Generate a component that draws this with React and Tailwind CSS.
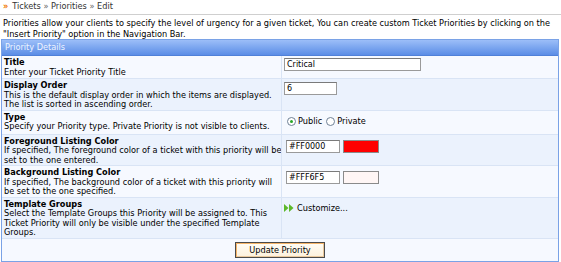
import React from 'react';

const Row = ({ title, lines, dark, minH = '', children }) => (
  <div className={`grid grid-cols-[279px_1fr] border-b border-[#d9e4f5] ${minH} ${dark ? 'bg-[#ebf2fd]' : 'bg-[#f6f9ff]'}`}>
    <div className="pl-[2px] pt-[2px]">
      <div className="font-bold whitespace-nowrap">{title}</div>
      {lines.map((l, i) => (
        <div key={i} className="whitespace-nowrap">{l}</div>
      ))}
    </div>
    <div className="border-l border-[#d9e4f5] pl-[2px] pt-[2px]">{children}</div>
  </div>
);

const Field = ({ value, w }) => (
  <div className={`h-[13px] ${w} bg-white border border-[#9a9a9a] border-t-[#7a7a7a] pl-[2px] leading-[11px] text-[8px]`}>
    {value}
  </div>
);

const ColorField = ({ value, color }) => (
  <div className="flex items-center gap-[3px] pl-[2px] pt-[3px]">
    <Field value={value} w="w-[54px]" />
    <div className="h-[13px] w-[36px] border border-[#8a8a8a]" style={{ backgroundColor: color }} />
  </div>
);

const Radio = ({ checked, label }) => (
  <span className="flex items-center gap-[2px]">
    <span className="w-[9px] h-[9px] rounded-full border border-[#6f8196] bg-white flex items-center justify-center">
      {checked && <span className="w-[3px] h-[3px] rounded-full bg-[#29a629]" />}
    </span>
    <span>{label}</span>
  </span>
);

export default function App() {
  return (
    <div className="w-[561px] h-[262px] bg-white text-black text-[8.2px] leading-[9.5px] overflow-hidden" style={{ fontFamily: '"DejaVu Sans", Verdana, sans-serif' }}>
      <div className="h-[15px] flex items-center gap-[4px] pl-[3px] border-b border-[#cfcfcf] text-[#333]">
        <span className="text-[#f07800] font-bold">»</span>
        <span>Tickets <span className="text-[#666]">»</span> Priorities <span className="text-[#666]">»</span> Edit</span>
      </div>
      <div className="pl-[3px] pt-[3px] leading-[10.5px] whitespace-nowrap">
        <div>Priorities allow your clients to specify the level of urgency for a given ticket, You can create custom Ticket Priorities by clicking on the</div>
        <div>"Insert Priority" option in the Navigation Bar.</div>
      </div>
      <div className="ml-px mr-[2px] border border-[#7aa2e6]">
        <div className="h-[16px] flex items-center pl-[3px] text-[#eef4ff] bg-gradient-to-b from-[#9cbef8] to-[#5b8de6] border-b border-[#4f80d8]">
          Priority Details
        </div>
        <Row title="Title" minH="min-h-[23px]" lines={['Enter your Ticket Priority Title']}>
          <Field value="Critical" w="w-[137px]" />
        </Row>
        <Row dark title="Display Order" lines={['This is the default display order in which the items are displayed.', 'The list is sorted in ascending order.']}>
          <div className="pt-px">
            <Field value="6" w="w-[53px]" />
          </div>
        </Row>
        <Row title="Type" minH="min-h-[24px]" lines={['Specify your Priority type. Private Priority is not visible to clients.']}>
          <div className="flex items-center gap-[4px] pl-[3px] pt-[4px]">
            <Radio checked label="Public" />
            <Radio label="Private" />
          </div>
        </Row>
        <Row dark title="Foreground Listing Color" lines={['If specified, The foreground color of a ticket with this priority will be', 'set to the one entered.']}>
          <ColorField value="#FF0000" color="#FF0000" />
        </Row>
        <Row title="Background Listing Color" lines={['If specified, The background color of a ticket with this priority will', 'be set to the one specified.']}>
          <ColorField value="#FFF6F5" color="#FFF6F5" />
        </Row>
        <Row dark title="Template Groups" lines={['Select the Template Groups this Priority will be assigned to. This', 'Ticket Priority will only be visible under the specified Template', 'Groups.']}>
          <div className="flex items-center gap-[3px] pt-[4px]">
            <svg width="10" height="8" viewBox="0 0 10 8">
              <path d="M0 0 L4.5 4 L0 8 Z" fill="#5cb82a" />
              <path d="M5 0 L9.5 4 L5 8 Z" fill="#5cb82a" />
            </svg>
            <span>Customize...</span>
          </div>
        </Row>
        <div className="h-[22px] bg-[#f6f9ff] flex items-center justify-center">
          <button className="h-[16px] px-[13px] border border-[#4a4a4a] bg-gradient-to-b from-[#fffdf6] to-[#fdf1dc] shadow-[inset_1px_1px_0_#f5b56a,inset_-1px_-1px_0_#e9c89c] leading-[14px] text-[8.2px] text-black">
            Update Priority
          </button>
        </div>
      </div>
    </div>
  );
}
